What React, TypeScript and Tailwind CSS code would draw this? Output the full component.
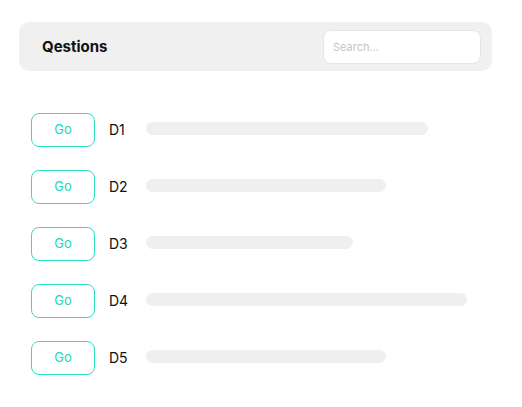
import React from "react";

const rows = [
  { label: "D1", w: 282 },
  { label: "D2", w: 240 },
  { label: "D3", w: 207 },
  { label: "D4", w: 321 },
  { label: "D5", w: 240 },
];

export default function App() {
  return (
    <div
      className="w-[522px] h-[407px] bg-white overflow-hidden"
      style={{ fontFamily: "Inter, Lato, sans-serif" }}
    >
      <div className="ml-[19px] mt-[22px] w-[473px] h-[49px] rounded-[10px] bg-[#f0f0f0] flex items-center justify-between pl-[23px] pr-[11px]">
        <div className="text-[15px] font-bold text-[#111] mt-[2px]">Qestions</div>
        <input
          className="w-[158px] h-[34px] rounded-[8px] bg-white border border-[#e6e6e6] px-[9px] text-[11px] outline-none placeholder:text-[#c4c4c4]"
          placeholder="Search..."
        />
      </div>
      <div className="mt-[42px] ml-[31px] flex flex-col gap-[23px]">
        {rows.map((r) => (
          <div key={r.label} className="flex items-center h-[34px]">
            <button className="w-[64px] h-[34px] rounded-[8px] border border-[#2ddfc0] text-[#22d6b6] text-[13px] flex items-center justify-center">
              Go
            </button>
            <div className="ml-[14px] w-[37px] text-[14px] font-normal text-[#111] mb-[2px]">{r.label}</div>
            <div
              className="h-[13px] rounded-full bg-[#efefef] mb-[3px]"
              style={{ width: r.w }}
            />
          </div>
        ))}
      </div>
    </div>
  );
}
